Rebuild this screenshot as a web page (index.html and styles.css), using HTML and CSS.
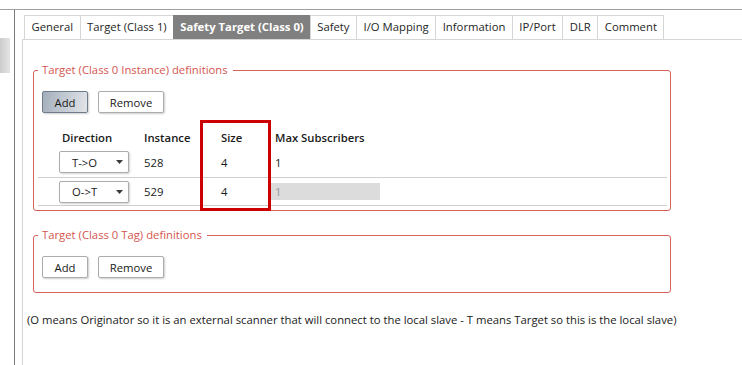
FILE: index.html
```html
<!DOCTYPE html>
<html lang="en">
<head>
    <meta charset="UTF-8">
    <meta name="viewport" content="width=device-width, initial-scale=1.0">
    <title>Safety Target (Class 0)</title>
    <link rel="stylesheet" href="styles.css">
</head>
<body>
    <div class="frame">
        <aside class="sidebar">
            <div class="sidebar-item"></div>
        </aside>
        <main class="main">
            <ul class="tabs">
                <li class="tab">General</li>
                <li class="tab">Target (Class 1)</li>
                <li class="tab active">Safety Target (Class 0)</li>
                <li class="tab">Safety</li>
                <li class="tab">I/O Mapping</li>
                <li class="tab">Information</li>
                <li class="tab">IP/Port</li>
                <li class="tab">DLR</li>
                <li class="tab">Comment</li>
            </ul>
            <div class="pane">
                <fieldset class="group">
                    <legend>Target (Class 0 Instance) definitions</legend>
                    <div class="actions">
                        <button class="btn btn-add pressed">Add</button>
                        <button class="btn btn-remove">Remove</button>
                    </div>
                    <div class="grid">
                        <div class="grid-row grid-head">
                            <span class="col-dir">Direction</span>
                            <span>Instance</span>
                            <span>Size</span>
                            <span class="col-max">Max Subscribers</span>
                        </div>
                        <div class="grid-row row-first">
                            <div class="select"><span>T-&gt;O</span><svg width="7" height="4" viewBox="0 0 7 4"><polygon points="0,0 7,0 3.5,4" fill="#3c3c3c"/></svg></div>
                            <span>528</span>
                            <span>4</span>
                            <span class="col-max">1</span>
                        </div>
                        <div class="grid-row row-second">
                            <div class="select"><span>O-&gt;T</span><svg width="7" height="4" viewBox="0 0 7 4"><polygon points="0,0 7,0 3.5,4" fill="#3c3c3c"/></svg></div>
                            <span>529</span>
                            <span>4</span>
                            <span class="col-max readonly">1</span>
                        </div>
                        <div class="highlight"></div>
                    </div>
                </fieldset>

                <fieldset class="group group-tag">
                    <legend>Target (Class 0 Tag) definitions</legend>
                    <div class="actions">
                        <button class="btn btn-add">Add</button>
                        <button class="btn btn-remove">Remove</button>
                    </div>
                </fieldset>

                <p class="note">(O means Originator so it is an external scanner that will connect to the local slave - T means Target so this is the local slave)</p>
            </div>
        </main>
    </div>
</body>
</html>
```

FILE: styles.css
```css
body {
    margin: 0;
    font-family: "Open Sans", "Noto Sans", sans-serif;
    font-size: 11.3px;
    color: #1a1a1a;
    background-color: #fff;
}
.frame {
    margin-top: 9px;
    border-top: 1px solid #a0a0a0;
    display: flex;
    height: 355px;
}
.sidebar {
    width: 15px;
    box-sizing: border-box;
    border-right: 1px solid #7a7a7a;
}
.sidebar-item {
    margin-top: 28px;
    width: 10px;
    height: 35px;
    background: linear-gradient(to right, #cdcdcd, #e4e4e4);
}
.main {
    flex: 1;
    display: flex;
    flex-direction: column;
    padding: 5px 0 0 7px;
}
.tabs {
    display: flex;
    margin: 0 0 0 2px;
    padding: 0;
    list-style: none;
    height: 24px;
}
.tab {
    height: 24px;
    box-sizing: border-box;
    border: 1px solid #d6d6d6;
    border-bottom: none;
    margin-left: -1px;
    padding: 0 6.5px;
    line-height: 22px;
    color: #262626;
    white-space: nowrap;
}
.tab:first-child {
    margin-left: 0;
}
.tab.active {
    background-color: #808080;
    border-color: #808080;
    color: #fff;
    font-weight: 700;
    padding: 0 6px;
}
.pane {
    flex: 1;
    border-top: 1px solid #d6d6d6;
    border-left: 1px solid #d6d6d6;
    padding: 22px 0 0 4px;
}
.group {
    margin: 0 0 0 6px;
    width: 638px;
    box-sizing: border-box;
    min-width: 0;
    border: 1px solid #d4635c;
    border-radius: 3px;
    padding: 0 0 4px 0;
}
.group legend {
    margin-left: 4px;
    padding: 0 5px 0 4px;
    line-height: 16px;
    color: #d4564f;
}
.group-tag {
    margin-top: 16px;
    padding-bottom: 14px;
}
.actions {
    display: flex;
    gap: 10px;
    padding: 13px 0 0 8px;
}
.btn {
    height: 22px;
    padding: 0;
    font: inherit;
    color: #1a1a1a;
    background-color: #fff;
    border: 1px solid #adadad;
    border-radius: 2px;
    box-shadow: 1px 1px 2px rgba(0, 0, 0, 0.2);
}
.btn-add {
    width: 46px;
}
.btn-remove {
    width: 66px;
}
.btn.pressed {
    background: linear-gradient(100deg, #a4afbc, #e2e5e9);
    border-color: #6f7c8b;
}
.grid {
    position: relative;
    margin: 14px 3px 0 4px;
}
.grid-row {
    display: grid;
    grid-template-columns: 85px 77px 50px 109px;
    align-items: center;
    padding-left: 21px;
}
.grid-head {
    height: 20px;
    font-weight: 600;
}
.col-dir {
    padding-left: 3px;
}
.col-max {
    padding-left: 4px;
}
.row-first {
    height: 30px;
    border-bottom: 1px solid #cfcfcf;
}
.row-second {
    height: 27px;
    border-bottom: 1px solid #cfcfcf;
}
.select {
    width: 70px;
    height: 22px;
    box-sizing: border-box;
    display: flex;
    align-items: center;
    justify-content: space-between;
    padding: 0 5px 0 12px;
    background-color: #fff;
    border: 1px solid #acacac;
    border-radius: 2px;
    box-shadow: 1px 1px 2px rgba(0, 0, 0, 0.18);
}
.readonly {
    height: 17px;
    line-height: 17px;
    background-color: #dcdcdc;
    color: #9a9a9a;
}
.highlight {
    position: absolute;
    left: 162px;
    top: -7px;
    width: 71px;
    height: 91px;
    box-sizing: border-box;
    border: 3px solid #cc0000;
}
.note {
    margin: 19px 0 0 0;
    line-height: 16px;
}
```
